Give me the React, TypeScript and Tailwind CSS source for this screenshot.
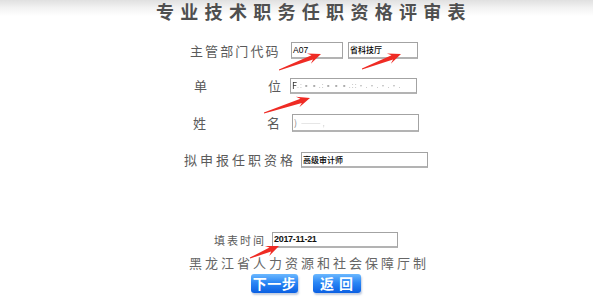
import React from "react";

function arrowPoints(x1: number, y1: number, x2: number, y2: number): string {
  const dx = x2 - x1;
  const dy = y2 - y1;
  const L = Math.hypot(dx, dy);
  const ux = dx / L;
  const uy = dy / L;
  const nx = -uy;
  const ny = ux;
  const hl = 13;
  const hw = 5.5;
  const sw = 2.2;
  const tw = 0.4;
  const bx = x2 - ux * hl;
  const by = y2 - uy * hl;
  const jx = x2 - ux * hl * 0.72;
  const jy = y2 - uy * hl * 0.72;
  const pts: [number, number][] = [
    [x1 + nx * tw, y1 + ny * tw],
    [jx + nx * sw, jy + ny * sw],
    [bx + nx * hw, by + ny * hw],
    [x2, y2],
    [bx - nx * hw, by - ny * hw],
    [jx - nx * sw, jy - ny * sw],
    [x1 - nx * tw, y1 - ny * tw],
  ];
  return pts.map((p) => `${p[0].toFixed(1)},${p[1].toFixed(1)}`).join(" ");
}

const inputCls =
  "flex items-center h-full bg-white border border-[#a3a3a3] border-b-2 border-b-[#b3b3b3] pl-[1px] overflow-hidden whitespace-nowrap";

export default function App() {
  const font = { fontFamily: '"Noto Sans CJK SC", "Noto Sans", sans-serif' };
  const arrows: [number, number, number, number][] = [
    [279, 70, 321, 54],
    [362, 69, 401, 54],
    [264, 113, 310, 98],
    [250, 258, 279, 246],
  ];
  return (
    <div
      className="relative w-[593px] h-[301px] overflow-hidden bg-[linear-gradient(to_bottom,#e0e0e0_0px,#f3f3f3_8px,#ffffff_16px)]"
      style={font}
    >
      {/* Title */}
      <div className="pt-[1px] h-[22px] pl-[156px] text-[18px] leading-[20px] font-bold tracking-[6.3px] text-[#4f4f4f] whitespace-nowrap">
        专业技术职务任职资格评审表
      </div>

      {/* Row 1 */}
      <div className="mt-[20px] h-[17px] flex items-center">
        <div className="pl-[190px] w-[291px] text-[13px] leading-[17px] tracking-[2.1px] text-[#5a5a5a] whitespace-nowrap">
          主管部门代码
        </div>
        <div className={`${inputCls} w-[52px]`}>
          <span className="text-[8.5px] leading-none text-black" style={{ fontFamily: '"Liberation Sans", sans-serif' }}>A07</span>
        </div>
        <div className={`${inputCls} w-[70px] ml-[5px]`}>
          <span className="text-[8px] leading-none text-black font-medium">省科技厅</span>
        </div>
      </div>

      {/* Row 2 */}
      <div className="mt-[19px] h-[16px] flex items-center">
        <div className="ml-[194px] w-[87px] flex justify-between text-[13px] leading-[16px] text-[#5a5a5a]">
          <span>单</span>
          <span>位</span>
        </div>
        <div className={`${inputCls} w-[127px] ml-[9px]`}>
          <span className="text-[9px] leading-none text-[#333] blur-[0.3px]">F</span>
          <span className="text-[7px] leading-none text-[#aaa] blur-[0.5px] tracking-[1px]">
            .:▪▪.:▪▪▪.::·.·.·.·.
          </span>
        </div>
      </div>

      {/* Row 3 */}
      <div className="mt-[20px] h-[18px] flex items-center">
        <div className="ml-[193px] w-[87px] flex justify-between text-[13px] leading-[18px] text-[#5a5a5a]">
          <span>姓</span>
          <span>名</span>
        </div>
        <div className={`${inputCls} w-[127px] ml-[12px]`}>
          <span className="text-[9px] leading-none text-[#888]">)</span>
          <span className="text-[8px] leading-none text-[#d0d0d0] blur-[0.4px] ml-[4px]">
            ——— ,
          </span>
        </div>
      </div>

      {/* Row 4 */}
      <div className="mt-[20px] h-[16px] flex items-center">
        <div className="pl-[184px] w-[301px] text-[13px] leading-[16px] tracking-[3px] text-[#5a5a5a] whitespace-nowrap">
          拟申报任职资格
        </div>
        <div className={`${inputCls} w-[127px]`}>
          <span className="text-[8px] leading-none text-black font-medium">高级审计师</span>
        </div>
      </div>

      {/* Row 5 */}
      <div className="mt-[64px] h-[16px] flex items-center">
        <div className="pl-[214px] w-[272px] text-[11px] leading-[16px] tracking-[2px] text-[#5a5a5a] whitespace-nowrap">
          填表时间
        </div>
        <div className={`${inputCls} w-[126px]`}>
          <span
            className="text-[9px] leading-none text-[#111] font-bold tracking-[-0.3px]"
            style={{ fontFamily: '"Liberation Sans", sans-serif' }}
          >
            2017-11-21
          </span>
        </div>
      </div>

      {/* Footer */}
      <div className="mt-[7px] h-[16px] pl-[189px] text-[13px] leading-[16px] tracking-[3px] text-[#666] whitespace-nowrap">
        黑龙江省人力资源和社会保障厅制
      </div>

      {/* Buttons */}
      <div className="mt-[3px] h-[19px] flex pl-[251px] gap-[15px]">
        <button className="w-[47px] h-[19px] rounded-[3px] bg-[linear-gradient(to_bottom,#6bb8ff_0%,#2b87f5_45%,#0a5fe2_100%)] text-white text-[14px] font-bold leading-[19px] tracking-[0.5px] shadow-[1px_2px_2px_rgba(80,110,160,0.35)]">
          下一步
        </button>
        <button className="w-[48px] h-[19px] rounded-[3px] bg-[linear-gradient(to_bottom,#6bb8ff_0%,#2b87f5_45%,#0a5fe2_100%)] text-white text-[14px] font-bold leading-[19px] tracking-[1px] shadow-[1px_2px_2px_rgba(80,110,160,0.35)]">
          返 回
        </button>
      </div>

      {/* Red annotation arrows */}
      <svg className="absolute left-0 top-0 pointer-events-none" width="593" height="301">
        {arrows.map((a, i) => (
          <polygon key={i} points={arrowPoints(a[0], a[1], a[2], a[3])} fill="#ef2b24" />
        ))}
      </svg>
    </div>
  );
}
